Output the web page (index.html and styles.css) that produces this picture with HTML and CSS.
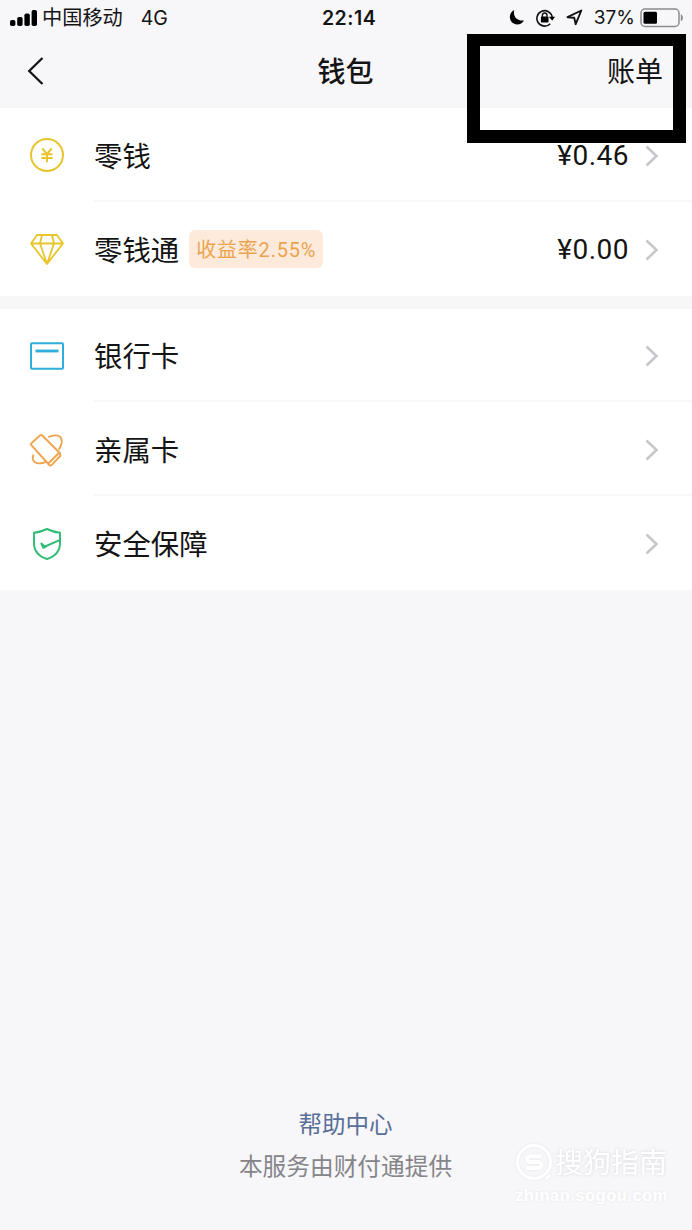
FILE: index.html
```html
<!DOCTYPE html>
<html lang="zh-CN">
<head>
<meta charset="utf-8">
<title>钱包</title>
<link rel="stylesheet" href="styles.css">
</head>
<body>
<main class="screen">
  <header class="top">
    <div class="status">
      <div class="status-left">
        <svg class="signal" width="28" height="18" viewBox="0 0 28 18"><rect x="0" y="11" width="5.4" height="6" rx="1.8"/><rect x="7.2" y="8" width="5.4" height="9" rx="1.8"/><rect x="14.4" y="4.5" width="5.4" height="12.5" rx="1.8"/><rect x="21.6" y="1" width="5.4" height="16" rx="1.8"/></svg>
        <span class="carrier">中国移动</span>
        <span class="network">4G</span>
      </div>
      <div class="clock">22:14</div>
      <div class="status-right">
        <svg class="moon" width="16" height="17" viewBox="0 0 16 17"><path d="M5.3 1C3.5 7 8 12.3 15 11.5C12.8 15.2 8.5 16.5 4.8 14.6C-.6 11.8-.5 3.7 5.3 1Z"/></svg>
        <svg class="lock" width="20" height="18" viewBox="0 0 20 18"><path d="M14.2 14.7A7.7 7.7 0 1 1 16.2 8.2" fill="none" stroke="#111" stroke-width="1.6"/><path d="M12.8 7.7H19.2L16.2 11.6Z"/><rect x="4.9" y="7.6" width="7.6" height="6" rx=".8"/><path d="M6.4 8V6.3a2.3 2.3 0 0 1 4.6 0V8" fill="none" stroke="#111" stroke-width="1.4"/></svg>
        <svg class="arrow" width="17" height="17" viewBox="0 0 17 17"><path d="M1.5 8.2L15.3 1.5L9.7 15.2L8.2 8.8Z" fill="none" stroke="#111" stroke-width="1.9" stroke-linejoin="round"/></svg>
        <span class="percent">37%</span>
        <svg class="battery" width="44" height="20" viewBox="0 0 44 20"><rect x="1" y="1" width="38" height="17.4" rx="4" fill="none" stroke="#8c8c90" stroke-width="1.5"/><rect x="3.5" y="3.7" width="13.5" height="12" rx="1.5"/><path d="M40.8 6.2c2.8 1 2.8 6 0 7Z" fill="#8c8c90"/></svg>
      </div>
    </div>
    <nav class="nav">
      <svg class="back" width="18" height="30" viewBox="0 0 18 30"><path d="M15.5 2L2.2 15L15.5 28" fill="none" stroke="#151515" stroke-width="2.3"/></svg>
      <h1 class="title">钱包</h1>
      <span class="bill">账单</span>
    </nav>
  </header>

  <section class="group">
    <div class="row">
      <svg class="icon" width="36" height="36" viewBox="0 0 36 36" fill="none" stroke="#e9c52d" stroke-width="2"><circle cx="18" cy="18" r="16"/><path d="M13.3 11.5L18 17L22.7 11.5M18 17V25.3M12.4 17.3H23.6M12.4 21H23.6" stroke-width="2"/></svg>
      <div class="body"><span class="label">零钱</span><span class="amount">¥0.46</span><svg class="chevron" width="14" height="22" viewBox="0 0 14 22"><path d="M1.5 1.5L11.5 11L1.5 20.5"/></svg></div>
    </div>
    <div class="row">
      <svg class="icon" width="36" height="36" viewBox="0 0 36 36" fill="none" stroke="#e9c52d" stroke-width="1.8" stroke-linejoin="round"><path d="M8 4H28L34 12.5L18 33L2 12.5ZM2 12.5H34M13 4L11 12.5L18 33L25 12.5L23 4"/></svg>
      <div class="body"><span class="label">零钱通</span><span class="tag">收益率2.55%</span><span class="amount">¥0.00</span><svg class="chevron" width="14" height="22" viewBox="0 0 14 22"><path d="M1.5 1.5L11.5 11L1.5 20.5"/></svg></div>
    </div>
  </section>

  <section class="group">
    <div class="row">
      <svg class="icon" width="36" height="36" viewBox="0 0 36 36" fill="none" stroke="#30acdd"><rect x="2" y="5.3" width="32" height="25.4" rx="1" stroke-width="2"/><path d="M6.5 13H29.5" stroke-width="2.8"/></svg>
      <div class="body"><span class="label">银行卡</span><svg class="chevron" width="14" height="22" viewBox="0 0 14 22"><path d="M1.5 1.5L11.5 11L1.5 20.5"/></svg></div>
    </div>
    <div class="row">
      <svg class="icon" width="36" height="36" viewBox="0 0 36 36" fill="none" stroke="#f1a34d" stroke-width="1.9" stroke-linejoin="round"><path d="M2.4 11.2L11.3 3.3Q12.3 2.6 13.3 3.5L31.2 21.5V24L22.3 33.3Q21.3 34 20.3 33L2.3 13.2Q1.6 12.1 2.4 11.2ZM19.7 31L30.2 20.8"/><path d="M19.3 5.2C24.5 2.6 30.3 2.8 32 6C33.6 9 32.6 13.6 29.6 17.8M4.4 22.6C3.4 25.6 3.4 28.4 5.6 30C8.6 31.8 13 31.6 17 29.8"/></svg>
      <div class="body"><span class="label">亲属卡</span><svg class="chevron" width="14" height="22" viewBox="0 0 14 22"><path d="M1.5 1.5L11.5 11L1.5 20.5"/></svg></div>
    </div>
    <div class="row">
      <svg class="icon" width="36" height="36" viewBox="0 0 36 36" fill="none" stroke="#31bd75" stroke-width="2" stroke-linejoin="round"><path d="M31 14V6.8Q24 6 18 3Q12 6 5 6.8V17C5 24.5 9.5 30.3 18 33C26.5 30.3 31 24.5 31 17V13.8L15 21"/><path d="M12.3 17.6L14.3 21.8L16.5 20.8L14.5 19.6Z" fill="#31bd75"/></svg>
      <div class="body"><span class="label">安全保障</span><svg class="chevron" width="14" height="22" viewBox="0 0 14 22"><path d="M1.5 1.5L11.5 11L1.5 20.5"/></svg></div>
    </div>
  </section>

  <footer class="footer">
    <a class="help">帮助中心</a>
    <p class="provider">本服务由财付通提供</p>
  </footer>

  <div class="highlight"></div>
  <div class="watermark">
    <div class="brand">
      <svg width="40" height="40" viewBox="0 0 40 40" fill="none" stroke="#fff"><circle cx="19" cy="19" r="16.5" stroke-width="3"/><path d="M27 13.2H16.5C10.5 13.2 10.5 19 16.5 19H22C28 19 28 25 22 25H11" stroke-width="4"/><path d="M31 36L35 32" stroke-width="3"/></svg>
      <span class="brand-name">搜狗指南</span>
    </div>
    <div class="domain">zhinan.sogou.com</div>
  </div>
</main>
</body>
</html>
```
FILE: styles.css
```css
* { box-sizing: border-box; }

body {
  margin: 0;
  background: #f7f6f9;
  color: #141414;
  font-family: "Liberation Sans", "Noto Sans CJK SC", sans-serif;
}

.screen {
  position: relative;
  display: flex;
  flex-direction: column;
  width: 692px;
  height: 1230px;
  overflow: hidden;
  white-space: nowrap;
}

.top { height: 108px; }

.status {
  display: grid;
  grid-template-columns: 1fr auto 1fr;
  align-items: center;
  height: 34px;
  padding: 0 8px 0 10px;
  font-family: Inter, "Noto Sans CJK SC", sans-serif;
  font-size: 20px;
  line-height: 34px;
}

.status-left, .status-right { display: flex; align-items: center; }
.signal { margin-right: 4px; }
.carrier { padding-top: 1px; font-size: 20.2px; }
.network { margin-left: 18px; font-size: 19.5px; }
.clock { padding: 0 0 0 4px; font-size: 19.5px; font-weight: 600; letter-spacing: .5px; }
.status-right { justify-content: flex-end; }
.moon { margin-right: 11px; }
.lock { margin-right: 10px; }
.arrow { margin-right: 11px; }
.percent { margin-right: 5px; font-size: 19px; }

.nav {
  display: grid;
  grid-template-columns: 1fr auto 1fr;
  align-items: center;
  height: 73px;
  padding: 0 29px 0 27px;
}

.title { margin: 0; padding: 4px 0 0 1px; font-size: 28px; line-height: 40px; font-weight: 500; }
.bill { justify-self: end; padding-top: 4px; font-size: 28px; line-height: 40px; }

.group { background: #fff; }
.group + .group { border-top: 13px solid #f7f7f7; }
.row { display: flex; align-items: center; height: 93.8px; padding: 1px 0 0 29px; }
.icon { flex: none; margin-right: 29px; }

.body {
  display: flex;
  flex: 1;
  align-items: center;
  height: 100%;
  padding: 3px 33px 0 0;
  border-bottom: 2px solid #f7f7f7;
}

.row:last-child .body { border-bottom-color: transparent; }
.label { padding-top: 2px; font-size: 28.4px; line-height: 40px; }

.tag {
  height: 38px;
  margin-left: 10px;
  margin-bottom: 1px;
  padding: 0 7px;
  border-radius: 6px;
  background: #fdeadb;
  color: #eaa450;
  font-family: Roboto, "Noto Sans CJK SC", sans-serif;
  font-size: 20px;
  line-height: 40px;
  letter-spacing: .8px;
}

.amount {
  margin-left: auto;
  padding-top: 1px;
  font-family: Roboto, "Noto Sans CJK SC", sans-serif;
  font-size: 28px;
  line-height: 40px;
  letter-spacing: .5px;
}

.chevron {
  margin-left: 16px;
  fill: none;
  stroke: #c7c7cb;
  stroke-width: 2.5;
}

.label:nth-last-child(2) + .chevron { margin-left: auto; }

.footer {
  display: flex;
  flex-direction: column;
  align-items: center;
  margin-top: auto;
  padding: 0 1px 42px 0;
}

.help { color: #596f98; font-size: 23.5px; line-height: 42px; }
.provider { margin: 0; color: #858589; font-size: 23.7px; line-height: 42px; }

.highlight {
  position: absolute;
  left: 467px;
  top: 34px;
  width: 219px;
  height: 109px;
  border: solid #000;
  border-width: 12px 13px 13px;
}

.watermark {
  position: absolute;
  left: 515px;
  top: 1142px;
  color: #fff;
  text-shadow: 0 0 3px #e6e5ea;
}

.brand { display: flex; align-items: center; height: 42px; filter: drop-shadow(0 0 1px #e6e5ea); }
.brand-name { padding-top: 2px; font-size: 28px; line-height: 40px; }
.domain { font-size: 16.5px; font-weight: 700; line-height: 22px; letter-spacing: .5px; }
```
